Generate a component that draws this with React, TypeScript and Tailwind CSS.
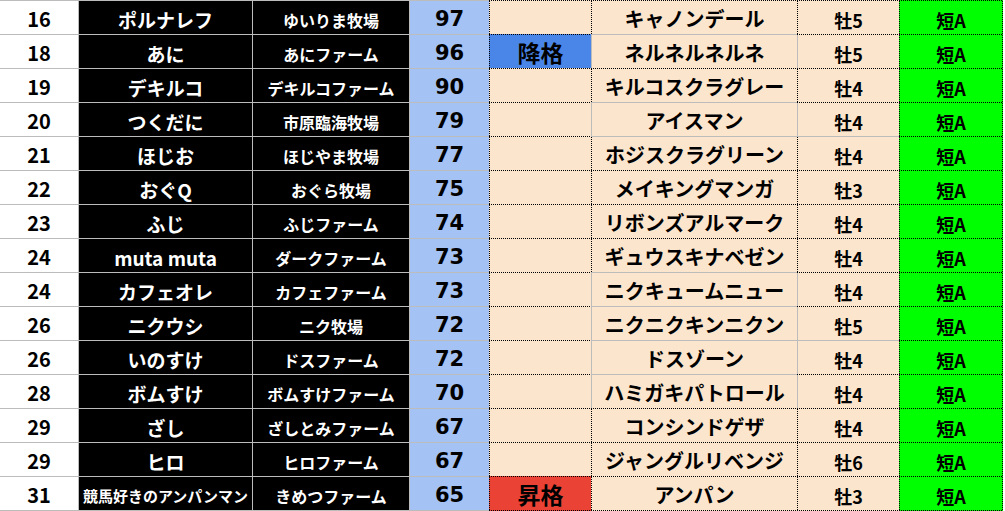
import type { ReactNode } from 'react';

const JP = "font-['Noto_Sans_CJK_JP','Noto_Sans',sans-serif] font-bold";

type Row = {
  rank: string;
  owner: string;
  farm: string;
  score: string;
  move: '' | '降格' | '昇格';
  horse: string;
  sex: string;
};

const ROWS: Row[] = [
  { rank: '16', owner: 'ポルナレフ', farm: 'ゆいりま牧場', score: '97', move: '', horse: 'キャノンデール', sex: '牡5' },
  { rank: '18', owner: 'あに', farm: 'あにファーム', score: '96', move: '降格', horse: 'ネルネルネルネ', sex: '牡5' },
  { rank: '19', owner: 'デキルコ', farm: 'デキルコファーム', score: '90', move: '', horse: 'キルコスクラグレー', sex: '牡4' },
  { rank: '20', owner: 'つくだに', farm: '市原臨海牧場', score: '79', move: '', horse: 'アイスマン', sex: '牡4' },
  { rank: '21', owner: 'ほじお', farm: 'ほじやま牧場', score: '77', move: '', horse: 'ホジスクラグリーン', sex: '牡4' },
  { rank: '22', owner: 'おぐQ', farm: 'おぐら牧場', score: '75', move: '', horse: 'メイキングマンガ', sex: '牡3' },
  { rank: '23', owner: 'ふじ', farm: 'ふじファーム', score: '74', move: '', horse: 'リボンズアルマーク', sex: '牡4' },
  { rank: '24', owner: 'muta muta', farm: 'ダークファーム', score: '73', move: '', horse: 'ギュウスキナベゼン', sex: '牡4' },
  { rank: '24', owner: 'カフェオレ', farm: 'カフェファーム', score: '73', move: '', horse: 'ニクキュームニュー', sex: '牡4' },
  { rank: '26', owner: 'ニクウシ', farm: 'ニク牧場', score: '72', move: '', horse: 'ニクニクキンニクン', sex: '牡5' },
  { rank: '26', owner: 'いのすけ', farm: 'ドスファーム', score: '72', move: '', horse: 'ドスゾーン', sex: '牡4' },
  { rank: '28', owner: 'ボムすけ', farm: 'ボムすけファーム', score: '70', move: '', horse: 'ハミガキパトロール', sex: '牡4' },
  { rank: '29', owner: 'ざし', farm: 'ざしとみファーム', score: '67', move: '', horse: 'コンシンドゲザ', sex: '牡4' },
  { rank: '29', owner: 'ヒロ', farm: 'ヒロファーム', score: '67', move: '', horse: 'ジャングルリベンジ', sex: '牡6' },
  { rank: '31', owner: '競馬好きのアンパンマン', farm: 'きめつファーム', score: '65', move: '昇格', horse: 'アンパン', sex: '牡3' },
];

// hand-drawn sheet borders: which rows of the horse/sex block got dotted sides
const BOXED = [1, 0, 1, 0, 1, 1, 1, 1, 0, 0, 0, 0, 1, 1, 1];
// horizontal rules above row k (index 15 = bottom edge)
const HORSE_TOP = [1, 0, 1, 0, 0, 1, 1, 1, 0, 0, 0, 0, 1, 1, 1, 1];
const SEX_TOP = [1, 1, 1, 1, 0, 1, 1, 1, 1, 1, 0, 1, 1, 1, 1, 1];

const MOVE_BG: Record<string, string> = {
  '': 'bg-[#fce5cd]',
  降格: 'bg-[#4a86e8]',
  昇格: 'bg-[#ea4335]',
};

const DOTS_H = 'bg-[linear-gradient(90deg,#000_50%,transparent_50%)] bg-[length:2px_1px]';
const DOTS_V = 'bg-[linear-gradient(180deg,#000_50%,transparent_50%)] bg-[length:1px_2px] bg-repeat-y';

// one 1px gridline row of the sheet
function Rule({ k }: { k: number }) {
  const r = ROWS[Math.min(k, ROWS.length - 1)];
  const dotted = (on: boolean, bg: string) => (on ? `${bg} ${DOTS_H}` : 'bg-[#bcbcbc]');
  return (
    <div className="flex h-px">
      <div className="h-px w-[78px] shrink-0 bg-[#bcbcbc]" />
      <div className="h-px w-[174px] shrink-0 bg-[#bcbcbc]" />
      <div className="h-px w-[157px] shrink-0 bg-[#bcbcbc]" />
      <div className="h-px w-[80px] shrink-0 bg-[#bcbcbc]" />
      <div className={`h-px w-[102px] shrink-0 ${dotted(true, MOVE_BG[r.move])}`} />
      <div className={`h-px w-[206px] shrink-0 ${dotted(HORSE_TOP[k] === 1, 'bg-[#fce5cd]')}`} />
      <div className={`h-px w-[102px] shrink-0 ${dotted(SEX_TOP[k] === 1, 'bg-[#fce5cd]')}`} />
      <div className={`h-px w-[104px] shrink-0 ${dotted(true, 'bg-[#00ff00]')}`} />
    </div>
  );
}

type Side = 'gray' | 'dot' | 'none';

function Cell({
  className,
  left,
  right = false,
  children,
}: {
  className: string;
  left: Side;
  right?: boolean;
  children?: ReactNode;
}) {
  return (
    <div
      className={`relative flex h-[33px] shrink-0 items-center justify-center whitespace-nowrap leading-none ${
        left === 'none' ? '' : left === 'gray' ? 'border-l border-l-[#bcbcbc]' : 'border-l border-l-transparent'
      } ${right ? 'border-r border-r-transparent' : ''} ${className}`}
    >
      {children}
      {left === 'dot' && <span className={`absolute top-0 -left-px h-full w-px ${DOTS_V}`} />}
      {right && <span className={`absolute top-0 -right-px h-full w-px ${DOTS_V}`} />}
    </div>
  );
}

export default function App() {
  return (
    <div className="h-[511px] w-[1005px] overflow-hidden bg-white">
      {ROWS.map((r, i) => {
        const boxed: Side = BOXED[i] === 1 ? 'dot' : 'gray';
        return (
          <div key={i}>
            <Rule k={i} />
            <div className="flex">
              <Cell className={`w-[78px] pt-[3px] text-[20px] text-black ${JP}`} left="none">
                {r.rank}
              </Cell>
              <Cell
                className={`w-[174px] bg-black pt-[3px] text-white ${JP} ${
                  r.owner.length > 10 ? 'text-[15px]' : 'text-[19px]'
                }`}
                left="gray"
              >
                {r.owner}
              </Cell>
              <Cell className={`w-[157px] bg-black pt-[4px] text-[16px] text-white ${JP}`} left="gray">
                {r.farm}
              </Cell>
              <Cell
                className="w-[80px] bg-[#a4c2f4] pt-[3px] font-['DejaVu_Sans',sans-serif] text-[21px] font-bold text-black"
                left="gray"
              >
                {r.score}
              </Cell>
              <Cell className={`w-[102px] ${MOVE_BG[r.move]} pt-[2px] text-[23px] text-black ${JP}`} left="dot">
                {r.move}
              </Cell>
              <Cell className={`w-[206px] bg-[#fce5cd] pt-[3px] text-[20px] text-black ${JP}`} left={boxed}>
                {r.horse}
              </Cell>
              <Cell className={`w-[102px] bg-[#fce5cd] pt-[4px] text-[18px] text-black ${JP}`} left={boxed}>
                {r.sex}
              </Cell>
              <Cell className={`w-[104px] bg-[#00ff00] pt-[4px] text-[18px] text-black ${JP}`} left="dot" right>
                短A
              </Cell>
            </div>
          </div>
        );
      })}
      <Rule k={ROWS.length} />
    </div>
  );
}
